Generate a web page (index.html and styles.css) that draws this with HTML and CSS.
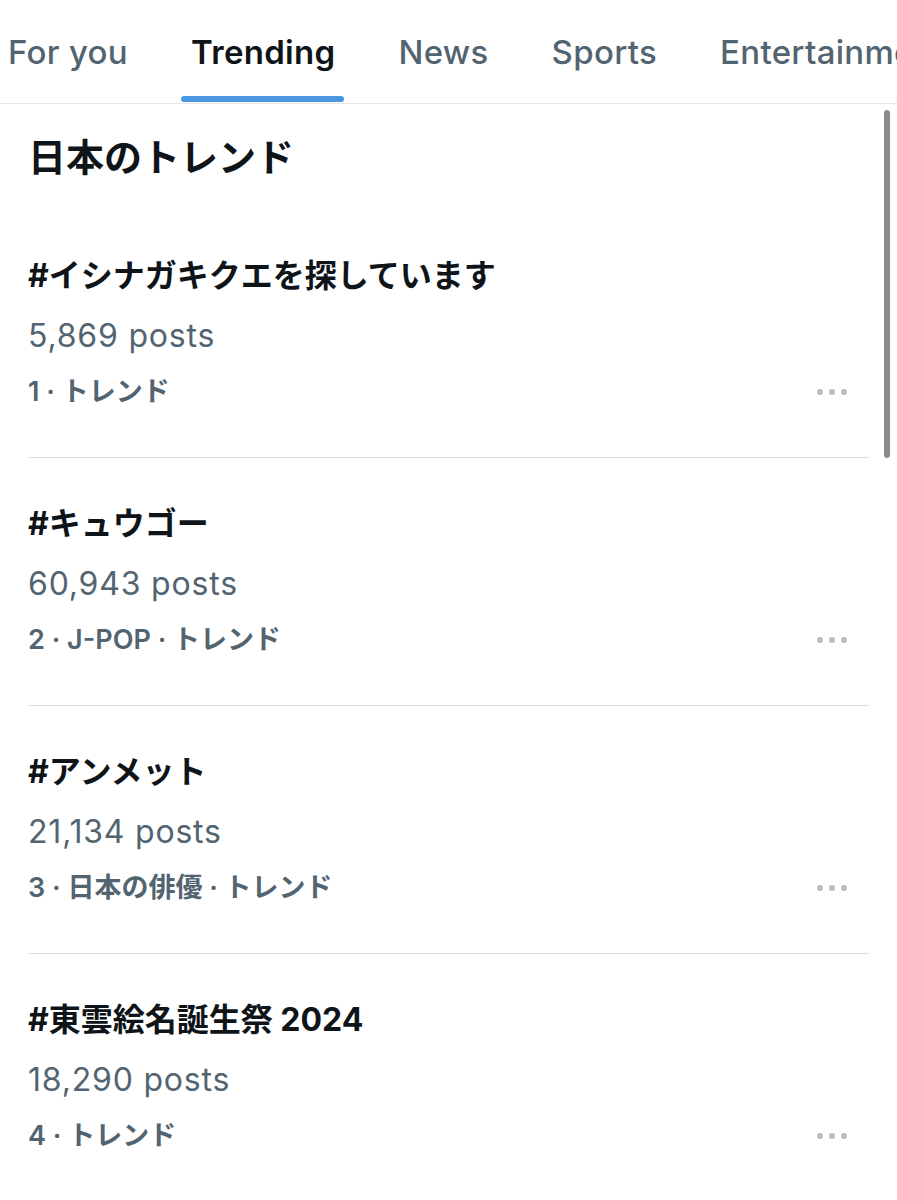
FILE: index.html
```html
<!DOCTYPE html>
<html lang="ja">
<head>
  <meta charset="UTF-8">
  <title>Trending</title>
  <link rel="stylesheet" href="styles.css">
</head>
<body>
  <nav class="tabs">
    <a href="#" class="tab">For you</a>
    <a href="#" class="tab active">Trending<span class="indicator"></span></a>
    <a href="#" class="tab">News</a>
    <a href="#" class="tab">Sports</a>
    <a href="#" class="tab">Entertainment</a>
  </nav>

  <main class="feed">
    <div class="scrollbar"></div>

    <h2 class="section-title">日本のトレンド</h2>

    <div class="trend">
      <div class="trend-name">#イシナガキクエを探しています</div>
      <div class="trend-count">5,869 posts</div>
      <div class="trend-meta">
        <span>1 · トレンド</span>
        <span class="more"><i></i><i></i><i></i></span>
      </div>
    </div>

    <div class="trend">
      <div class="trend-name">#キュウゴー</div>
      <div class="trend-count">60,943 posts</div>
      <div class="trend-meta">
        <span>2 · J-POP · トレンド</span>
        <span class="more"><i></i><i></i><i></i></span>
      </div>
    </div>

    <div class="trend">
      <div class="trend-name">#アンメット</div>
      <div class="trend-count">21,134 posts</div>
      <div class="trend-meta">
        <span>3 · 日本の俳優 · トレンド</span>
        <span class="more"><i></i><i></i><i></i></span>
      </div>
    </div>

    <div class="trend">
      <div class="trend-name">#東雲絵名誕生祭 2024</div>
      <div class="trend-count">18,290 posts</div>
      <div class="trend-meta">
        <span>4 · トレンド</span>
        <span class="more"><i></i><i></i><i></i></span>
      </div>
    </div>
  </main>
</body>
</html>
```

FILE: styles.css
```css
* {
  margin: 0;
  padding: 0;
  box-sizing: border-box;
  font-family: 'Inter', 'Noto Sans CJK JP', sans-serif;
}

body {
  background-color: #fff;
  color: #0f1419;
  width: 897px;
  overflow: hidden;
}

.tabs {
  display: flex;
  gap: 63px;
  height: 104px;
  padding-left: 8px;
  border-bottom: 1px solid #e6e6e6;
  white-space: nowrap;
  overflow: hidden;
}

.tab {
  display: flex;
  flex-direction: column;
  padding-top: 33px;
  height: 103px;
  font-size: 33px;
  line-height: 38px;
  letter-spacing: 0.3px;
  font-weight: 500;
  color: #536471;
  text-decoration: none;
}

.tab.active {
  color: #0f1419;
  font-weight: 600;
}

.indicator {
  display: block;
  margin: auto -9px 1px -10px;
  height: 6px;
  border-radius: 3px;
  background: #4a96e0;
}

.feed {
  position: relative;
  padding: 28px 28px 0;
}

.scrollbar {
  position: absolute;
  top: 6px;
  right: 7px;
  width: 6px;
  height: 348px;
  border-radius: 3px;
  background: #8c8c8c;
}

.section-title {
  margin-bottom: 28px;
  font-size: 38px;
  line-height: 50px;
  font-weight: 700;
}

.trend {
  padding: 46px 0 45px;
  border-bottom: 1px solid #dedede;
}

.trend-name {
  font-size: 32px;
  line-height: 40px;
  font-weight: 700;
}

.trend-count {
  margin-top: 20px;
  font-size: 32px;
  line-height: 40px;
  letter-spacing: 0.8px;
  color: #536471;
}

.trend-meta {
  display: flex;
  justify-content: space-between;
  align-items: center;
  margin-top: 16px;
  font-size: 27px;
  line-height: 40px;
  font-weight: 600;
  color: #536471;
}

.more {
  display: flex;
  gap: 6px;
  margin-right: 22px;
}

.more i {
  width: 6px;
  height: 6px;
  border-radius: 50%;
  background: #b6bec7;
}
```
